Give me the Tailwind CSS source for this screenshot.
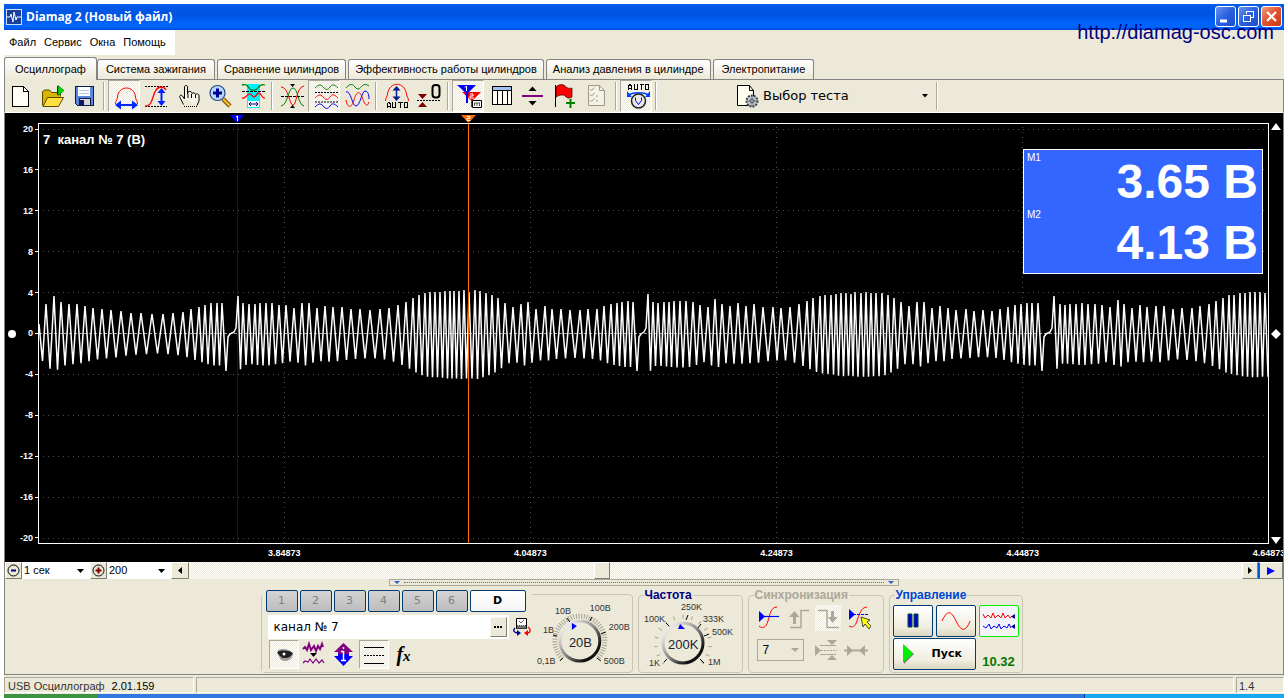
<!DOCTYPE html>
<html lang="ru">
<head>
<meta charset="utf-8">
<title>Diamag 2 (Новый файл)</title>
<script src="https://cdn.jsdelivr.net/npm/@tailwindcss/browser@4"></script>
</head>
<body class="bg-white text-black font-['Liberation_Sans',Arial,sans-serif] text-[11px] overflow-hidden">
<div class="min-h-screen flex flex-col px-1 pt-1">

<!-- Title bar -->
<header class="relative h-[26px] shrink-0 flex items-center justify-between bg-[linear-gradient(#0a5fe8,#0058e6_12%,#0054e3_45%,#0062f8_70%,#0066ff_88%,#0048d8)] pl-[2px] pr-[2px]">
  <div class="flex items-center gap-1">
    <svg class="w-4 h-4" viewBox="0 0 16 16"><rect x=".5" y=".5" width="15" height="15" fill="#1a3f9c" stroke="#cfe0ff"/><path d="M1 8h3l1-3 2 8 1-10 2 8 1-3h4" fill="none" stroke="#fff"/></svg>
    <h1 class="text-white font-bold text-[12px] leading-4 font-['Open_Sans','Noto_Sans',sans-serif]">Diamag 2 (Новый файл)</h1>
  </div>
  <div class="flex gap-[2px] -mt-px">
    <button aria-label="Свернуть" class="w-[21px] h-[21px] rounded-[3px] border border-white bg-[linear-gradient(135deg,#6a94f0,#2a5fe0_50%,#1c4fc8)]"><svg viewBox="0 0 19 19" class="block"><path d="M4 14h7" stroke="#fff" stroke-width="3"/></svg></button>
    <button aria-label="Восстановить" class="w-[21px] h-[21px] rounded-[3px] border border-white bg-[linear-gradient(135deg,#6a94f0,#2a5fe0_50%,#1c4fc8)]"><svg viewBox="0 0 19 19" class="block" fill="none" stroke="#fff" shape-rendering="crispEdges"><path d="M4.500 8.500h7v6h-7zM4 8h8M7.500 7V4.500h7v6H12M7 4h8"/></svg></button>
    <button aria-label="Закрыть" class="w-[21px] h-[21px] rounded-[3px] border border-white bg-[linear-gradient(135deg,#f09a80,#e0502c_50%,#c83c18)]"><svg viewBox="0 0 19 19" class="block"><path d="M5 5l9 9M14 5l-9 9" stroke="#fff" stroke-width="2.200"/></svg></button>
  </div>
  <a href="http://diamag-osc.com" class="absolute right-[10px] top-[16px] text-[20px] leading-6 text-[#000080] z-10">http://diamag-osc.com</a>
</header>

<div class="flex-1 flex flex-col bg-[#ece9d8]">
<!-- Menu -->
<nav class="h-[26px] shrink-0 flex pb-px">
  <div class="bg-white flex items-center gap-2 pl-[5px] pr-[9px] text-[11px]">
    <a href="#">Файл</a><a href="#">Сервис</a><a href="#">Окна</a><a href="#">Помощь</a>
  </div>
</nav>

<!-- Tabs -->
<div role="tablist" class="h-6 shrink-0 flex items-end gap-[2px] border-b border-[#848484] text-[11px] whitespace-nowrap">
  <button role="tab" aria-selected="true" class="-mb-px h-[23px] px-[10px] border border-b-0 border-[#848484] rounded-t-[3px] bg-[linear-gradient(#fff,#ece9d8)] -mr-[2px]">Осциллограф</button>
  <button role="tab" class="h-5 px-2 border border-b-0 border-[#848484] rounded-t-[3px] bg-[linear-gradient(#fff,#ece9d8)]">Система зажигания</button>
  <button role="tab" class="h-5 px-[6px] border border-b-0 border-[#848484] rounded-t-[3px] bg-[linear-gradient(#fff,#ece9d8)]">Сравнение цилиндров</button>
  <button role="tab" class="h-5 px-[6px] border border-b-0 border-[#848484] rounded-t-[3px] bg-[linear-gradient(#fff,#ece9d8)]">Эффективность работы цилиндров</button>
  <button role="tab" class="h-5 px-[6px] border border-b-0 border-[#848484] rounded-t-[3px] bg-[linear-gradient(#fff,#ece9d8)]">Анализ давления в цилиндре</button>
  <button role="tab" class="h-5 px-2 border border-b-0 border-[#848484] rounded-t-[3px] bg-[linear-gradient(#fff,#ece9d8)]">Электропитание</button>
</div>

<!-- Toolbar -->
<div class="h-8 shrink-0 flex items-center border-x border-[#848484]">
  <button aria-label="Новый" class="w-8 h-8 -ml-px"><svg viewBox="0 0 32 32" shape-rendering="crispEdges"><path d="M8.500 6.500h11l5 5v15h-16z" fill="#fffdf5" stroke="#000"/><path d="M19.500 6.500v5h5" fill="none" stroke="#000"/></svg></button>
  <button aria-label="Открыть" class="w-8 h-8"><svg viewBox="0 0 32 32"><path d="M6.500 25.500v-14l2-1.500h5l2 2.500h9v4" fill="#d8b400" stroke="#5c4a00"/><path d="M7 26.500l4.500-9h16l-5 9z" fill="#ffe040" stroke="#5c4a00"/><path d="M21.500 6v9" stroke="#003c00"/><path d="M22 5.500l6 5-6 5z" fill="#00e000" stroke="#006000" stroke-width=".6"/></svg></button>
  <button aria-label="Сохранить" class="w-8 h-8"><svg viewBox="0 0 32 32" shape-rendering="crispEdges"><path d="M7.500 6.500h18v19h-16l-2-2z" fill="#5a86dc" stroke="#10184c"/><rect x="10" y="7" width="12" height="9" fill="#fff"/><path d="M11 10h10M11 13h10" stroke="#b8c8e8"/><path d="M11 18.500h11v7H11z" fill="#d8d8d8" stroke="#10184c"/><rect x="12" y="20" width="4" height="5" fill="#101860"/></svg></button>
  <i class="w-2 h-7 flex justify-center"><b class="w-[2px] border-l border-[#aca899] bg-white"></b></i>
  <button aria-label="Автопериод" class="w-8 h-8 border border-[#aca899] border-r-white border-b-white bg-[repeating-conic-gradient(#fff_0_25%,#ece9d8_0_50%)] bg-[length:2px_2px]"><svg viewBox="1 1 30 30" class="block"><path d="M7.500 24c0-4 2-4 2-7 1-12 17-12 18 0 0 3 2 3 2 7" fill="none" stroke="#f00"/><path d="M11 25h15" stroke="#0026ff" stroke-width="2"/><path d="M7 25l6-4.500v9zM30 25l-6-4.500v9z" fill="#0026ff"/></svg></button>
  <button aria-label="Амплитуда" class="w-8 h-8"><svg viewBox="0 0 32 32"><path d="M5 6.500h23M5 26.500h22" stroke="#000" stroke-dasharray="2 1"/><path d="M5 26c10 1 6-18 16-19 3 0 4 1 5 3" fill="none" stroke="#f00" stroke-width="1.300"/><path d="M21.500 11v11" stroke="#0020ff" stroke-width="2"/><path d="M21.500 8l-4 5h8zM21.500 26l-4-5h8z" fill="#0020ff"/></svg></button>
  <button aria-label="Рука" class="w-8 h-8"><svg viewBox="0 0 32 32"><path d="M12.500 18.500V7c0-2 3-2 3 0v7l.5-2c1-1 3-1 3.500.5l.5 1c1-1 3-1 3.500 1 1-1 3.500-1 3.500 1.500v5l-2 4.500M12.500 19l-2-3c-1-1.500-4-.5-2.500 1.500l3.500 7" fill="#f6f3e8" stroke="#000"/><path d="M16 14v4M19.500 14v4M23.500 15v3" stroke="#000"/><path d="M12 26.500h13" stroke="#000" stroke-dasharray="1 1"/></svg></button>
  <button aria-label="Масштаб" class="w-8 h-8"><svg viewBox="0 0 32 32"><path d="M19 19l7 7" stroke="#5c4000" stroke-width="4.500"/><path d="M19 19l7 7" stroke="#f0b428" stroke-width="2.500"/><circle cx="13.500" cy="13" r="7.500" fill="#b4d8ff" stroke="#2c4880" stroke-width="1.200"/><path d="M9 13h9M13.500 8.500v9" stroke="#000090" stroke-width="3"/></svg></button>
  <button aria-label="Интервал" class="w-8 h-8"><svg viewBox="0 0 32 32"><path d="M11 4h13v24H11z" fill="#00f0ff"/><path d="M6 5c4-1 5 0 7 3s7 3 9 0 4-4 7-3" fill="none" stroke="#008000" stroke-width="1.300"/><path d="M6 11.500h23" stroke="#000" stroke-dasharray="3 1"/><path d="M6 18c4 1 4-3 7-4s3 3 5 3 3-4 5-4 3 6 6 5" fill="none" stroke="#f00" stroke-width="1.300"/><path d="M12 21h11v6H12z" fill="#fff"/><path d="M13 24h9M15 22l-2 2 2 2M20 22l2 2-2 2" fill="none" stroke="#000080"/></svg></button>
  <i class="w-2 h-7 flex justify-center"><b class="w-[2px] border-l border-[#aca899] bg-white"></b></i>
  <button aria-label="Наложение" class="w-8 h-8"><svg viewBox="0 0 32 32"><path d="M5 7c8 0 8 18 12 18S20 7 28 6" fill="none" stroke="#f00"/><path d="M5 26c7-1 7-18 12-18s5 17 11 18" fill="none" stroke="#008000"/><path d="M5 16.500h24" stroke="#000" stroke-dasharray="3 1"/><path d="M14 4h5l-2.500 3zM14 28h5l-2.500-3z"/></svg></button>
  <button aria-label="Раздельно" class="w-8 h-8 border border-[#aca899] border-r-white border-b-white bg-[repeating-conic-gradient(#fff_0_25%,#ece9d8_0_50%)] bg-[length:2px_2px]"><svg viewBox="1 1 30 30" class="block" fill="none"><path d="M7 8c4-4 6-4 9 0 2 2 4 2 6-1s4-3 8 1" stroke="#008000"/><path d="M7 12.500h23M7 22h23" stroke="#000" stroke-dasharray="2 1"/><path d="M7 18c4-4 6-4 9 0 2 2 4 2 6-1s4-3 8 1" stroke="#f00"/><path d="M7 27c4-4 6-4 9 0 2 2 4 2 6-1s4-3 8 1" stroke="#00f"/></svg></button>
  <button aria-label="Вместе" class="w-8 h-8"><svg viewBox="0 0 32 32" fill="none"><path d="M6 8c4-5 7-4 9-1 3 4 5 1 7-1s4-2 7 0" stroke="#008000"/><path d="M6 12c5-2 6 14 10 14s6-15 9-15 4 4 4 8" stroke="#00f"/><path d="M6 20c2 10 6 7 8 0s5-11 8-3 5 11 7 5" stroke="#f00"/></svg></button>
  <i class="w-2 h-7 flex justify-center"><b class="w-[2px] border-l border-[#aca899] bg-white"></b></i>
  <button aria-label="Авто" class="w-8 h-8"><svg viewBox="0 0 32 32"><path d="M5.500 21c0-4 2-4 2-7 2-13 17-13 19 0 0 3 2 3 2 7" fill="none" stroke="#f00"/><path d="M16.500 9v9" stroke="#001c90" stroke-width="1.500"/><path d="M16.500 6l-4 4.500h8zM16.500 21l-4-4.500h8z" fill="#001c90"/><path d="M7.500 28v-4l1.500-2 1.500 2v4m-3-2h3M12.500 22v5h3v-5M18 22.500h5m-2.500 0V28M24.500 22.500h3v5h-3z" fill="none" stroke="#000" shape-rendering="crispEdges"/></svg></button>
  <button aria-label="Ноль" class="w-8 h-8"><svg viewBox="0 0 32 32"><rect x="20.500" y="5" width="7" height="12.500" rx="3" fill="none" stroke="#000" stroke-width="2"/><path d="M5 20.500h24" stroke="#000" stroke-dasharray="2 1"/><path d="M6 14h9l-4.500 5zM6 27h9l-4.500-5z" fill="#800000"/></svg></button>
  <i class="w-2 h-7 flex justify-center"><b class="w-[2px] border-l border-[#aca899] bg-white"></b></i>
  <button aria-label="Маркеры" class="w-8 h-8 border border-[#aca899] border-r-white border-b-white bg-[repeating-conic-gradient(#fff_0_25%,#ece9d8_0_50%)] bg-[length:2px_2px]"><svg viewBox="1 1 30 30" class="block"><path d="M10 12h19l-9 9zM19 18h2v9h-2z" fill="#f00"/><path d="M5 5h19l-9 9zM14 12h2v11h-2z" fill="#00f"/><path d="M13 7.500l1.500-1.500v5M18 14h3v2h-3v2h4" fill="none" stroke="#fff"/><path d="M20.500 20.500h9v7h-9z" fill="#fff" stroke="#000"/><path d="M22 23h6M22.500 23v3M25 23v3M27.500 23v3" stroke="#555"/></svg></button>
  <button aria-label="Таблица" class="w-8 h-8"><svg viewBox="0 0 32 32" shape-rendering="crispEdges"><path d="M8.500 6.500h19v18h-19z" fill="#fffdf5" stroke="#000"/><path d="M9 7h18v3H9z" fill="#a0c0f0"/><path d="M8 10.500h20M13.500 10v15M18.500 10v15M23.500 10v15" stroke="#000"/></svg></button>
  <button aria-label="Разделить" class="w-8 h-8"><svg viewBox="0 0 32 32"><path d="M6 16h21" stroke="#800080" stroke-width="2"/><path d="M12.500 11h8l-4-4.500zM12.500 21h8l-4 4.500z"/></svg></button>
  <button aria-label="Добавить метку" class="w-8 h-8"><svg viewBox="0 0 32 32"><path d="M7.500 5v22" stroke="#000"/><path d="M8 7c3-3 7-3 9-1s4 3 7 2v9c-3 2-5 1-7-1s-6-1-9 1z" fill="#f00" stroke="#300" stroke-width=".7"/><path d="M18 23h9M22.500 19v9" stroke="#008000" stroke-width="2"/></svg></button>
  <button aria-label="Список" class="w-8 h-8"><svg viewBox="0 0 32 32" fill="none" stroke="#9c988a"><path d="M8.500 5.500h11l5 5v15h-16z" fill="#f4f1e6"/><path d="M19.500 5.500v5h5M10 9l1.500 1.500 3-3M10 14.500l1.500 1.500 3-3M10 20l1.500 1.500 3-3M16 16h2M16 21h2"/></svg></button>
  <i class="w-2 h-7 flex justify-center"><b class="w-[2px] border-l border-[#aca899] bg-white"></b></i>
  <button aria-label="Автоматическое напряжение" class="w-8 h-8 border border-[#aca899] border-r-white border-b-white bg-[repeating-conic-gradient(#fff_0_25%,#ece9d8_0_50%)] bg-[length:2px_2px]"><svg viewBox="1 1 30 30" class="block" fill="none"><path d="M8.500 10V6L10 4.500 11.500 6v4m-3-2h3M14.500 4v5h3V4M19.500 4.500h4m-2 0V10M25.500 4.500h3v5h-3z" stroke="#000" shape-rendering="crispEdges"/><path d="M8 15c6-3 15-3 21 0" stroke="#0040ff" stroke-width="1.500"/><path d="M7 11v6h5zM30 11v6h-5z" fill="#0040ff"/><circle cx="18.500" cy="21" r="7" fill="#e8e8e8" stroke="#222" stroke-width="1.500"/><path d="M15.500 17.500v3l3 4 3-4v-3" stroke="#00f"/></svg></button>
  <i class="w-2 h-7 flex justify-center"><b class="w-[2px] border-l border-[#aca899] bg-white"></b></i>
  <label for="test" class="ml-[73px]"><svg class="w-7 h-8" viewBox="0 0 28 32"><path d="M4.500 5.500h12l4 5v15h-16z" fill="#fffdf0" stroke="#000"/><path d="M16.500 5.500v5h4" fill="none" stroke="#000"/><circle cx="19" cy="21" r="5.500" fill="#c4c8cc" stroke="#3c4450" stroke-width="2" stroke-dasharray="2 1"/><circle cx="19" cy="21" r="2" fill="#fff" stroke="#3c4450"/><path d="M19 16v10M14 21h10" stroke="#3c4450" stroke-width=".6"/></svg></label>
  <div class="flex items-center w-[170px] ml-[2px]">
    <select id="test" class="appearance-none bg-transparent text-[13px] w-[159px] font-['DejaVu_Sans',sans-serif]"><option>Выбор теста</option></select>
    <svg class="w-[6px] h-1" viewBox="0 0 6 4"><path d="M0 0h6L3 3.500z"/></svg>
  </div>
  <i class="w-2 h-7 flex justify-center"><b class="w-[2px] border-l border-[#aca899] bg-white"></b></i>
</div>

<!-- Oscillogram -->
<main class="flex-1 flex flex-col border-t border-t-white border-x border-x-[#848484] bg-black text-white overflow-hidden font-bold text-[9px]">
  <div class="flex-1 flex pt-[10px]">
    <div class="w-[33px] flex items-center">
      <svg class="w-2 h-2 ml-[3px] shrink-0" viewBox="0 0 8 8"><circle cx="4" cy="4" r="4" fill="#fff"/></svg>
      <div class="flex-1 self-stretch flex flex-col justify-between items-end">
        <span class="h-3 leading-3 flex items-center gap-[2px]">20<i class="w-[3px] h-px bg-white"></i></span>
        <span class="h-3 leading-3 flex items-center gap-[2px]">16<i class="w-[3px] h-px bg-white"></i></span>
        <span class="h-3 leading-3 flex items-center gap-[2px]">12<i class="w-[3px] h-px bg-white"></i></span>
        <span class="h-3 leading-3 flex items-center gap-[2px]">8<i class="w-[3px] h-px bg-white"></i></span>
        <span class="h-3 leading-3 flex items-center gap-[2px]">4<i class="w-[3px] h-px bg-white"></i></span>
        <span class="h-3 leading-3 flex items-center gap-[2px]">0<i class="w-[3px] h-px bg-white"></i></span>
        <span class="h-3 leading-3 flex items-center gap-[2px]">-4<i class="w-[3px] h-px bg-white"></i></span>
        <span class="h-3 leading-3 flex items-center gap-[2px]">-8<i class="w-[3px] h-px bg-white"></i></span>
        <span class="h-3 leading-3 flex items-center gap-[2px]">-12<i class="w-[3px] h-px bg-white"></i></span>
        <span class="h-3 leading-3 flex items-center gap-[2px]">-16<i class="w-[3px] h-px bg-white"></i></span>
        <span class="h-3 leading-3 flex items-center gap-[2px]">-20<i class="w-[3px] h-px bg-white"></i></span>
      </div>
    </div>
    <div class="relative flex-1 border border-white">
      <svg id="plot" class="absolute inset-0 w-full h-full" viewBox="39 124 1229 419" preserveAspectRatio="none" fill="none" shape-rendering="crispEdges">
        <path id="grid" stroke="#505050" stroke-dasharray="1 4"/>
        <path d="M39 333.500h1229" stroke="#a0a0a0" stroke-dasharray="3 2"/>
        <path d="M237.500 124v420" stroke="#0000d0"/>
        <path id="wave" stroke="#fff" stroke-width="1.500" stroke-linejoin="bevel" shape-rendering="geometricPrecision"/>
        <path d="M468.500 124v420" stroke="#ff6a00"/>
      </svg>
      <svg class="absolute left-[16.150%] -ml-[7px] -top-[9px] w-[14px] h-2" viewBox="0 0 14 8"><path d="M0 0h14L7 8z" fill="#0000ff"/><path d="M6 2l1.500-1v5" fill="none" stroke="#fff"/></svg>
      <svg class="absolute left-[34.900%] -ml-[7px] -top-[9px] w-[15px] h-2" viewBox="0 0 15 8"><path d="M0 0h15L7.500 8z" fill="#ff6a00"/><path d="M6 1.500h3v2H6v2h3.500" fill="none" stroke="#fff"/></svg>
      <div class="absolute left-1 top-[8px] text-[13px] leading-4 whitespace-pre">7  канал № 7 (В)</div>
      <div class="absolute right-[5px] top-[25px] w-[240px] border border-white bg-[#3366ff] pl-[3px] pr-1 h-[125px] flex flex-col">
        <span class="font-normal text-[10px] leading-4 h-2">M1</span>
        <strong class="text-right text-[48px] leading-[48px] h-[49px]">3.65 В</strong>
        <span class="font-normal text-[10px] leading-4 h-3">M2</span>
        <strong class="text-right text-[48px] leading-[48px]">4.13 В</strong>
      </div>
    </div>
    <div class="w-[14px] flex flex-col items-center justify-between">
      <svg class="w-[10px] h-[7px]" viewBox="0 0 10 7"><path d="M5 0l5 7H0z" fill="#fff"/></svg>
      <svg class="w-[10px] h-[10px]" viewBox="0 0 10 10"><path d="M5 0l5 5-5 5-5-5z" fill="#fff"/></svg>
      <svg class="w-[10px] h-[7px]" viewBox="0 0 10 7"><path d="M5 7L0 0h10z" fill="#fff"/></svg>
    </div>
  </div>
  <div class="h-[18px] shrink-0 pl-[33px] pr-[14px]">
    <div class="ml-[10%] grid grid-cols-5 w-full text-center leading-3 pt-[3px]">
      <span>3.84873</span><span>4.04873</span><span>4.24873</span><span>4.44873</span><span>4.64873</span>
    </div>
  </div>
</main>

<!-- Time scale and scroll row -->
<div class="h-[17px] shrink-0 flex border-x border-[#848484] text-[11px]">
  <button aria-label="Уменьшить" class="w-[17px] border border-white border-r-[#808070] border-b-[#808070]"><svg viewBox="0 0 15 15"><circle cx="7.500" cy="7.500" r="5.500" fill="none" stroke="#000"/><path d="M5 7.500h5" stroke="#000080" stroke-width="2"/></svg></button>
  <div class="w-[68px] bg-white flex items-center"><select aria-label="Развёртка" class="appearance-none w-[55px] pl-[2px]"><option>1 сек</option></select><svg class="w-[7px] h-1" viewBox="0 0 7 4"><path d="M0 0h7L3.500 4z"/></svg></div>
  <button aria-label="Увеличить" class="w-[17px] border border-white border-r-[#808070] border-b-[#808070]"><svg viewBox="0 0 15 15"><circle cx="7.500" cy="7.500" r="5.500" fill="none" stroke="#000"/><path d="M4.500 7.500h6M7.500 4.500v6" stroke="#800000" stroke-width="2"/></svg></button>
  <div class="w-[64px] bg-white flex items-center"><select aria-label="Масштаб" class="appearance-none w-[51px] pl-[2px]"><option>200</option></select><svg class="w-[7px] h-1" viewBox="0 0 7 4"><path d="M0 0h7L3.500 4z"/></svg></div>
  <button aria-label="Влево" class="w-[18px] border border-white border-r-[#808070] border-b-[#808070] flex items-center justify-center"><svg class="w-1 h-[7px]" viewBox="0 0 4 7"><path d="M4 0v7L0 3.500z"/></svg></button>
  <div class="flex-1 flex bg-[repeating-conic-gradient(#fff_0_25%,#ece9d8_0_50%)] bg-[length:2px_2px]">
    <div class="w-[38.500%]"></div>
    <button aria-label="Ползунок" class="w-4 bg-[#ece9d8] border border-white border-r-[#808070] border-b-[#808070]"></button>
  </div>
  <button aria-label="Вправо" class="w-4 border border-white border-r-[#808070] border-b-[#808070] flex items-center justify-center"><svg class="w-1 h-[7px]" viewBox="0 0 4 7"><path d="M0 0v7l4-3.500z"/></svg></button>
  <button aria-label="Воспроизвести" class="w-[25px] border border-l-2 border-l-[#0058e6] border-t-white border-r-[#808070] border-b-[#808070] flex items-center justify-center"><svg class="w-2 h-2" viewBox="0 0 8 8"><path d="M0 0v8l8-4z" fill="#00f"/></svg></button>
</div>

<!-- Control panel -->
<section class="shrink-0 h-[96px] border-x border-b border-[#848484] flex flex-col items-center">
  <div class="w-[510px] h-[7px] border border-[#aca899] flex items-center justify-between px-1">
    <svg class="w-[6px] h-[3px]" viewBox="0 0 6 3"><path d="M0 0h6L3 3z" fill="#2860d0"/></svg>
    <i class="flex-1 mx-1 border-t border-dotted border-[#4070d0]"></i>
    <svg class="w-[6px] h-[3px]" viewBox="0 0 6 3"><path d="M0 0h6L3 3z" fill="#2860d0"/></svg>
  </div>
  <div class="flex gap-[5px] pt-1 pr-[5px] h-[88px]">
    <!-- Channels -->
    <div class="w-[372px] mt-[4px] h-[79px] border border-[#c8c5b2] rounded-[4px] flex">
      <div class="-mt-[5px] pl-[4px] flex flex-col bg-[#ece9d8] w-[271px]">
        <div class="flex gap-[2px] font-['DejaVu_Sans',sans-serif] text-[11px] text-[#808080]">
          <button class="w-8 h-[22px] rounded-[2px] border border-[#003c74] bg-[linear-gradient(#d4d4d4,#bcbcbc)]">1</button>
          <button class="w-8 h-[22px] rounded-[2px] border border-[#003c74] bg-[linear-gradient(#d4d4d4,#bcbcbc)]">2</button>
          <button class="w-8 h-[22px] rounded-[2px] border border-[#003c74] bg-[linear-gradient(#d4d4d4,#bcbcbc)]">3</button>
          <button class="w-8 h-[22px] rounded-[2px] border border-[#003c74] bg-[linear-gradient(#d4d4d4,#bcbcbc)]">4</button>
          <button class="w-8 h-[22px] rounded-[2px] border border-[#003c74] bg-[linear-gradient(#d4d4d4,#bcbcbc)]">5</button>
          <button class="w-8 h-[22px] rounded-[2px] border border-[#003c74] bg-[linear-gradient(#d4d4d4,#bcbcbc)]">6</button>
          <button class="w-14 h-[22px] rounded-[2px] border border-[#003c74] bg-[linear-gradient(#fff,#f4f4f4)] font-bold text-black">D</button>
        </div>
        <div class="flex items-center gap-1 mt-[3px] ml-[2px]">
          <div class="w-[241px] h-6 bg-white flex items-center pr-[2px]">
            <input aria-label="Имя канала" value="канал № 7" class="flex-1 min-w-0 px-[6px] text-[12px] font-['DejaVu_Sans',sans-serif]">
            <button aria-label="Обзор" class="w-[17px] h-5 bg-[#ece9d8] border border-[#f8f6ee] border-r-[#808070] border-b-[#808070] flex items-center justify-center gap-px"><i class="w-[2px] h-[2px] bg-black"></i><i class="w-[2px] h-[2px] bg-black"></i><i class="w-[2px] h-[2px] bg-black"></i></button>
          </div>
          <button aria-label="Датчик"><svg class="w-[18px] h-5" viewBox="0 0 18 20"><path d="M3.500 1.500h10v10h-10z" fill="#fff" stroke="#000"/><path d="M4 10h9" stroke="#707070" stroke-width="3"/><path d="M4 8.500h9" stroke="#208020" stroke-dasharray="1 1"/><path d="M6 4l2 2 3-3" fill="none" stroke="#666"/><path d="M2 11c-3 3 0 5 3 5" fill="none" stroke="#000090" stroke-width="1.300"/><path d="M4 13v6l4-3z" fill="#000090"/><path d="M15 10c3 2 3 6-1 6" fill="none" stroke="#f00" stroke-width="1.300"/><path d="M15 13v6l-4-3z" fill="#f00"/></svg></button>
        </div>
        <div class="flex items-center mt-px ml-[3px]">
          <button aria-label="Показать" class="w-[30px] h-[29px] border border-[#aca899] border-r-white border-b-white bg-[repeating-conic-gradient(#fff_0_25%,#ece9d8_0_50%)] bg-[length:2px_2px]"><svg viewBox="0 0 28 27"><path d="M8 9c5-2 9-1 12 1l3 3c-1 5-4 7-8 7s-7-3-7-11z" fill="#a0a0a0"/><path d="M7 11c5-2 11-2 16 1-2 4-5 5-8 5s-6-2-8-6z" fill="#202020"/><circle cx="14" cy="13" r="1.500" fill="#fff"/><path d="M11 16l2 1" stroke="#c02020"/></svg></button>
          <button aria-label="Фильтр"><svg class="w-[30px] h-[29px]" viewBox="0 0 30 29"><path d="M4 9l2-2 2 3 2-6 2 6 3-4 2 5 2-5 2 3 2-5 1 3" fill="none" stroke="#800080" stroke-width="2"/><path d="M11 13h7l-3.500 4z"/><path d="M4 23l2-2 3 1 2-3 3 4 3-4 3 4 3-3 2 3" fill="none" stroke="#800080" stroke-width="1.200"/></svg></button>
          <button aria-label="Сдвиг"><svg class="w-[30px] h-[29px]" viewBox="0 0 30 29"><path d="M14.500 3L24 12h-4v3H9v-3H5z" fill="#800080"/><path d="M14.500 26L24 16h-4v-2H9v2H5z" fill="#0000ff"/><path d="M14.500 7v2M12 11.500h2.500v9M12 20.500h5" stroke="#fff" stroke-width="1.500" fill="none"/></svg></button>
          <button aria-label="Линии" class="w-[30px] h-[29px] border border-[#aca899] border-r-white border-b-white bg-[repeating-conic-gradient(#fff_0_25%,#ece9d8_0_50%)] bg-[length:2px_2px]"><svg viewBox="0 0 28 27" shape-rendering="crispEdges"><path d="M4 6.500h20M4 22.500h20" stroke="#000"/><path d="M4 14.500h20" stroke="#000" stroke-dasharray="2 1"/></svg></button>
          <button aria-label="Функция" class="w-[30px] h-[29px] font-['Liberation_Serif',serif] italic font-bold text-[20px] leading-6">f<span class="text-[15px]">x</span></button>
        </div>
      </div>
      <svg class="w-[100px] h-[74px] mt-[3px]" viewBox="0 0 100 74" font-size="9" fill="#333">
        <defs><linearGradient id="rim" x1="0" y1="0" x2="1" y2="1"><stop offset=".15" stop-color="#e8e8e8"/><stop offset=".5" stop-color="#888"/><stop offset=".8" stop-color="#111"/></linearGradient></defs>
        <path d="M30.300 60.700A25 25 0 1 1 65.700 60.700" fill="none" stroke="#a8a494" stroke-width="5" stroke-dasharray="1 1.600"/>
        <path d="M31 60l-3 3M25 38l-4-1M38 24l-3-4M58 23l2-4M69 36l5-2M65 60l4 3" stroke="#000"/>
        <circle cx="48" cy="43" r="20" fill="#ece9d8" stroke="url(#rim)" stroke-width="3"/>
        <path d="M40 25v7l5-4z" fill="#00f"/>
        <text x="37" y="49" font-size="13" fill="#223">20В</text>
        <text x="23" y="16">10В</text><text x="58" y="13">100В</text><text x="11" y="35">1В</text><text x="77" y="32">200В</text><text x="5" y="66">0,1В</text><text x="72" y="66">500В</text>
      </svg>
    </div>

    <!-- Frequency -->
    <fieldset class="w-[105px] h-[83px] border border-[#c8c5b2] rounded-[4px]">
      <legend class="ml-[5px] px-px text-[12px] leading-[10px] h-[10px] font-bold text-[#000080]">Частота</legend>
      <svg class="w-[102px] h-[72px] -mt-[2px]" viewBox="0 0 102 72" font-size="9" fill="#333">
        <path d="M25 65A27 27 0 1 1 63 65" fill="none" stroke="#a8a494" stroke-width="4" stroke-dasharray="1 8"/>
        <path d="M28 61l-3 3M31 29l-4-4M47 22l2-5M59 30l3-4M65 38l5-2M61 61l4 4" stroke="#000"/>
        <circle cx="44" cy="45" r="20" fill="#ece9d8" stroke="url(#rim)" stroke-width="3"/>
        <path d="M41 26l-2 5h7z" fill="#00f"/>
        <text x="29" y="51" font-size="13" fill="#223">200K</text>
        <text x="5" y="24">100K</text><text x="42" y="12">250K</text><text x="64" y="24">333K</text><text x="73" y="37">500K</text><text x="10" y="68">1K</text><text x="69" y="67">1M</text>
      </svg>
    </fieldset>

    <!-- Synchronisation -->
    <fieldset class="w-[136px] h-[83px] border border-[#c8c5b2] rounded-[4px]">
      <legend class="ml-[5px] px-px text-[12px] leading-[10px] h-[10px] font-bold text-[#aca899]">Синхронизация</legend>
      <div class="flex pl-[6px] pt-[5px] gap-[4px]">
        <button aria-label="Уровень"><svg class="w-[26px] h-[26px]" viewBox="0 0 26 26"><path d="M4 21c3 3 7 2 9-5s3-14 9-14" fill="none" stroke="#f00"/><path d="M4 11.500h20" stroke="#00f" stroke-width="1.200"/><path d="M4 6v11l6-5.500z" fill="#00f"/></svg></button>
        <button aria-label="Фронт"><svg class="w-[26px] h-[26px]" viewBox="0 0 26 26" fill="none" stroke="#aca899"><path d="M5 22.500h11V5.500h8" stroke-width="1.500"/><path d="M9.500 19v-8" stroke-width="3"/><path d="M4 12l5.500-6 5 6z" fill="#aca899" stroke="none"/></svg></button>
        <button aria-label="Спад" class="bg-[repeating-conic-gradient(#fff_0_25%,#ece9d8_0_50%)] bg-[length:2px_2px]"><svg class="w-[26px] h-[26px]" viewBox="0 0 26 26" fill="none" stroke="#aca899"><path d="M3 5.500h9v17h12" stroke-width="1.500"/><path d="M17.500 6v7" stroke-width="3"/><path d="M13 12h9.500L17.500 18z" fill="#aca899" stroke="none"/></svg></button>
        <button aria-label="Выбрать уровень"><svg class="w-[26px] h-[26px]" viewBox="0 0 26 26"><path d="M4 21c3 2 6 1 8-5s4-14 10-14" fill="none" stroke="#f00"/><path d="M4 9.500h20" stroke="#00f" stroke-dasharray="3 1"/><path d="M4 4v11l6-5.500z" fill="#00f"/><path d="M16 12l9 3-3 2 4 4-2 3-4-5-2 3z" fill="#ff0" stroke="#222" stroke-width=".8"/></svg></button>
      </div>
      <div class="flex items-center pl-[8px] pt-[8px] gap-[10px]">
        <div class="w-[47px] h-[22px] border border-[#aca899] flex items-center"><select aria-label="Канал" class="appearance-none w-[33px] pl-[5px] text-[12px]"><option>7</option></select><svg class="w-2 h-1" viewBox="0 0 8 4"><path d="M0 0h8L4 4z" fill="#aca899"/></svg></div>
        <button aria-label="Окно"><svg class="w-6 h-[22px]" viewBox="0 0 24 22" fill="#aca899"><path d="M1 6v11l6-5.500zM13 1h10l-5 5zM13 21h10l-5-5z"/><path d="M6 6.500h16M6 15.500h16" stroke="#aca899"/><path d="M7 11.500h16" stroke="#aca899" stroke-dasharray="2 1"/></svg></button>
        <button aria-label="Сжать" class="-ml-1"><svg class="w-6 h-[22px]" viewBox="0 0 24 22" fill="#aca899"><path d="M3 6v11l6-5.500zM21 6v11l-6-5.500z"/><path d="M0 11.500h24" stroke="#aca899" stroke-width="2"/></svg></button>
      </div>
    </fieldset>

    <!-- Run control -->
    <fieldset class="w-[134px] h-[83px] border border-[#c8c5b2] rounded-[4px]">
      <legend class="ml-[5px] px-px text-[12px] leading-[10px] h-[10px] font-bold text-[#0046d5]">Управление</legend>
      <div class="grid grid-cols-[40px_40px_40px] gap-x-[3px] gap-y-px pl-[3px] pt-[5px]">
        <button aria-label="Пауза" class="h-8 rounded-[2px] border border-[#003c74] bg-[linear-gradient(#fff,#f0eee0_70%,#dcd6c0)] flex items-center justify-center"><svg class="w-3 h-4" viewBox="0 0 12 16"><path d="M1 1h4v13H1zM7 1h4v13H7z" fill="#0000d8" stroke="#005020"/></svg></button>
        <button aria-label="Синус" class="h-8 rounded-[2px] border border-[#003c74] bg-[linear-gradient(#fff,#f0eee0_70%,#dcd6c0)]"><svg viewBox="0 0 38 30"><path d="M5 15C10 4 14 4 19 15s10 11 14 0" fill="none" stroke="#f00"/></svg></button>
        <button aria-label="Поток" class="h-8 rounded-[2px] border border-[#00f000] bg-[#f4f4f8]"><svg viewBox="0 0 38 30" fill="none"><path d="M3 8l2 4 3-3 3 3 2-5 2 5 3-3 3 3 2-5 2 5 3-3 2 3 2-2" stroke="#f00"/><path d="M3 20l3 2 3-4 2 5 3-3 3 2 2-4 2 5 3-3 3 2 2-4 2 4" stroke="#00f"/><path d="M35 8v5l-4-2.500zM35 18v5l-4-2.500z" fill="#000080"/></svg></button>
        <button class="col-span-2 h-8 rounded-[2px] border border-[#003c74] bg-[linear-gradient(#fff,#f0eee0_70%,#dcd6c0)] flex items-center pl-[9px] gap-[18px] font-bold text-[11px] font-['DejaVu_Sans',sans-serif]"><svg class="w-[11px] h-5" viewBox="0 0 11 20"><path d="M1 1v19l10-10z" fill="#777"/><path d="M0 0v19l10-9.500z" fill="#00f000"/></svg>Пуск</button>
        <output class="self-end text-center font-bold text-[13px] leading-4 text-[#007800]">10.32</output>
      </div>
    </fieldset>
  </div>
</section>

<!-- Status bar -->
<footer class="shrink-0 h-[19px] pt-[2px] pb-px flex gap-[2px] text-[11px] leading-4">
  <div class="w-[190px] border border-[#aca899] border-r-white border-b-white pl-[3px] flex gap-[7px] text-[#333] whitespace-nowrap"><span>USB Осциллограф</span><span class="text-black">2.01.159</span></div>
  <div class="flex-1 border border-[#aca899] border-r-white border-b-white"></div>
  <div class="w-12 border border-[#aca899] border-r-white border-b-white pl-[2px] text-[#333]">1.4</div>
</footer>
<div class="shrink-0 h-1 flex bg-[#3078e0]"><i class="w-[93px] bg-[#3c9440]"></i><i class="flex-1"></i><i class="w-[200px] border-l border-[#0a3c90] bg-[#18a8f0]"></i></div>
</div>
</div>

<script>
// Peaks of the signal as [x, y]; a third member marks the gap of a missing tooth after that peak.
const peaks = [[46,304],[54,296],[61,302],[69,304],[77,304],[85,306],[93,308],[102,309],[111,310],[121,311],[131,313],[141,313],[152,314],[163,314],[173,313],[183,312],[191,309],[199,307],[205,305],[211,303],[217,303],[222,303,1],
[238,296],[243,303],[249,304],[255,304],[260,303],[266,303],[272,303],[279,305],[286,305],[294,308],[302,303],[309,303],[317,308],[325,306],[333,307],[342,307],[351,309],[360,309],[370,310],[380,309],[389,308],[398,305],[406,302],[413,298],[419,295],[425,293],[430,292],[435,292],[440,292],[445,291],[450,291],[454,291],[459,291],[464,290],[469,292],[475,290],[480,291],[486,293],[492,295],[498,298],[505,303],[513,307],[521,304],[528,302],[536,309],[545,306],[552,309],[561,309],[570,310],[580,310],[588,309],[597,309],[604,306],[611,304],[617,303],[622,302],[628,301],[633,302,1],
[648,294],[653,302],[658,303],[664,302],[669,302],[674,301],[680,301],[686,301],[693,302],[700,305],[708,307],[715,299],[722,304],[730,306],[738,303],[746,306],[754,304],[763,307],[773,307],[781,308],[790,307],[799,304],[807,301],[813,298],[820,296],[825,295],[831,295],[836,294],[841,293],[846,293],[851,294],[855,292],[861,293],[866,292],[871,293],[876,293],[882,293],[888,295],[894,298],[901,302],[909,306],[917,302],[924,302],[932,308],[940,306],[948,308],[956,310],[966,309],[974,311],[983,310],[992,311],[1000,309],[1008,307],[1015,305],[1021,304],[1027,303],[1032,303],[1038,303,1],
[1054,296],[1060,304],[1065,305],[1070,304],[1076,304],[1082,303],[1088,304],[1095,304],[1102,305],[1110,307],[1118,300],[1124,304],[1132,308],[1140,305],[1147,307],[1156,306],[1164,306],[1173,309],[1182,308],[1192,308],[1200,306],[1209,304],[1216,301],[1223,298],[1229,295],[1234,295],[1240,293],[1245,293],[1250,292],[1255,292],[1260,292],[1265,293]];
let d = "M39 324L42.500 361";
peaks.forEach(([x, y, gap], i) => {
  d += `L${x} ${y}`;
  const next = peaks[i + 1] || [1271, 292];
  if (gap) {
    d += `L${x + 4} 371L${x + 6} 337L${x + 8} 334L${next[0] - 4} 332L${next[0] - 2} 328`;
  } else {
    const mid = (x + next[0]) / 2;
    const amp = 333 - (y + next[1]) / 2;
    d += `L${mid} ${333 + amp * 1.080}`;
  }
});
document.getElementById("wave").setAttribute("d", d);
let g = "";
for (let k = 0; k < 11; k++) if (k !== 5) g += `M43 ${Math.floor(129 + 40.900 * k) + 0.5}H1268`;
for (const x of [284.5, 530.5, 776.5, 1022.5]) g += `M${x} 127V544`;
document.getElementById("grid").setAttribute("d", g);
</script>
</body>
</html>
